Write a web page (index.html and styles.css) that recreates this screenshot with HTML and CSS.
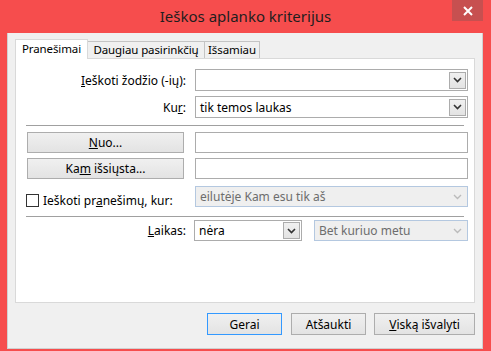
FILE: index.html
```html
<!DOCTYPE html>
<html lang="lt">
<head>
    <meta charset="UTF-8">
    <title>Ieškos aplanko kriterijus</title>
    <link rel="stylesheet" href="styles.css">
</head>
<body>
    <div class="window">
        <div class="titlebar">
            <span></span>
            <span class="title">Ieškos aplanko kriterijus</span>
            <span class="close">
                <svg width="10" height="10" viewBox="0 0 10 10"><path d="M1 1 L9 9 M9 1 L1 9" stroke="#fff" stroke-width="2"/></svg>
            </span>
        </div>

        <div class="client">
            <div class="tabs">
                <div class="tab active">Pranešimai</div>
                <div class="tab t2">Daugiau pasirinkčių</div>
                <div class="tab t3">Išsamiau</div>
            </div>

            <div class="panel">
                <div class="row r1">
                    <label class="lbl"><u>I</u>eškoti žodžio (-ių):</label>
                    <div class="combo">
                        <span class="val"></span>
                        <span class="drop"><svg width="9" height="6" viewBox="0 0 9 6"><path d="M1 1 L4.5 4.5 L8 1" stroke="#333" stroke-width="1.6" fill="none"/></svg></span>
                    </div>
                </div>
                <div class="row r2">
                    <label class="lbl">Ku<u>r</u>:</label>
                    <div class="combo">
                        <span class="val">tik temos laukas</span>
                        <span class="drop"><svg width="9" height="6" viewBox="0 0 9 6"><path d="M1 1 L4.5 4.5 L8 1" stroke="#333" stroke-width="1.6" fill="none"/></svg></span>
                    </div>
                </div>

                <div class="sep"></div>

                <div class="row r3">
                    <button class="btn wide"><u>N</u>uo...</button>
                    <div class="field"></div>
                </div>
                <div class="row r4">
                    <button class="btn wide">Ka<u>m</u> išsiųsta...</button>
                    <div class="field"></div>
                </div>
                <div class="row r5">
                    <label class="check"><span class="box"></span><span>Ieškoti pr<u>a</u>nešimų, kur:</span></label>
                    <div class="combo disabled">
                        <span class="val">eilutėje Kam esu tik aš</span>
                        <span class="drop"><svg width="9" height="6" viewBox="0 0 9 6"><path d="M1 1 L4.5 4.5 L8 1" stroke="#bbb" stroke-width="1.4" fill="none"/></svg></span>
                    </div>
                </div>

                <div class="sep"></div>

                <div class="row r6">
                    <label class="lbl"><u>L</u>aikas:</label>
                    <div class="pair">
                        <div class="combo short">
                            <span class="val">nėra</span>
                            <span class="drop"><svg width="9" height="6" viewBox="0 0 9 6"><path d="M1 1 L4.5 4.5 L8 1" stroke="#333" stroke-width="1.6" fill="none"/></svg></span>
                        </div>
                        <div class="combo disabled when">
                            <span class="val">Bet kuriuo metu</span>
                            <span class="drop"><svg width="9" height="6" viewBox="0 0 9 6"><path d="M1 1 L4.5 4.5 L8 1" stroke="#bbb" stroke-width="1.4" fill="none"/></svg></span>
                        </div>
                    </div>
                </div>
            </div>

            <div class="actions">
                <button class="btn def">Gerai</button>
                <button class="btn">Atšaukti</button>
                <button class="btn big"><u>V</u>iską išvalyti</button>
            </div>
        </div>
    </div>
</body>
</html>
```

FILE: styles.css
```css
* {
    margin: 0;
    padding: 0;
    box-sizing: border-box;
}

body {
    width: 491px;
    height: 351px;
    overflow: hidden;
    background-color: #f64d4d;
    font-family: "Noto Sans", "Open Sans", sans-serif;
    font-size: 12px;
    color: #000;
}

.titlebar {
    height: 33px;
    display: grid;
    grid-template-columns: 1fr auto 1fr;
    align-items: start;
}

.title {
    font-size: 15px;
    color: #1e1e1e;
    line-height: 32px;
}

.close {
    justify-self: end;
    width: 31px;
    height: 21px;
    margin-right: 8px;
    background-color: #c75050;
    display: flex;
    align-items: center;
    justify-content: center;
}

.client {
    margin: 0 8px 0 7px;
    height: 316px;
    background-color: #f0f0f0;
    border: 1px solid #d0d0d0;
    border-top: none;
    padding: 6px 7px 0 6px;
}

/* tabs */
.tabs {
    display: flex;
    align-items: flex-end;
    height: 19px;
    padding-left: 1px;
}

.tab {
    height: 17px;
    border: 1px solid #c4c4c4;
    border-bottom: none;
    background-color: #f0f0f0;
    text-align: center;
    line-height: 15px;
    font-size: 11.5px;
    white-space: nowrap;
    letter-spacing: -0.1px;
    position: relative;
    z-index: 1;
}

.tab.active {
    width: 73px;
    height: 20px;
    margin-bottom: -1px;
    background-color: #fff;
    border-color: #d9d9d9;
    z-index: 2;
    line-height: 18px;
}

.tab.t2 {
    width: 117px;
    border-left: none;
}

.tab.t3 {
    width: 56px;
    border-left: 1px solid #c4c4c4;
    margin-left: -1px;
}

.panel {
    width: 460px;
    height: 245px;
    margin-left: 1px;
    background-color: #fff;
    border: 1px solid #d9d9d9;
    padding: 10px 6px 0 10px;
}

.row {
    display: grid;
    grid-template-columns: 161px 1fr;
    column-gap: 8px;
    align-items: center;
}

.r2 { margin-top: 5px; }
.r3 { margin-top: 6px; }
.r4 { margin-top: 5px; }
.r5 { margin-top: 5px; }
.r6 { margin-top: 3px; }

.lbl {
    text-align: right;
    padding-right: 1px;
}

.sep {
    height: 1px;
    margin: 7px 4px 0 0;
    background-color: #a0a0a0;
}

.r1 .combo, .r2 .combo {
    height: 22px;
}

.combo {
    height: 21px;
    border: 1px solid #acacac;
    background-color: #fff;
    display: flex;
    align-items: center;
    justify-content: space-between;
    padding: 0 1px 0 4px;
}

.combo .val {
    white-space: nowrap;
}

.drop {
    width: 17px;
    height: 17px;
    border: 1px solid #acacac;
    background: linear-gradient(#f0f0f0, #e3e3e3);
    display: flex;
    align-items: center;
    justify-content: center;
}

.combo.disabled {
    background-color: #efefef;
    border-color: #b4c8e0;
    color: #6d6d6d;
}

.combo.disabled .drop {
    border: none;
    background: none;
}

.field {
    height: 21px;
    border: 1px solid #acacac;
    background-color: #fff;
}

.btn {
    font-family: inherit;
    font-size: 12px;
    color: #000;
    height: 21px;
    border: 1px solid #adadad;
    background: linear-gradient(#f0f0f0, #e3e3e3);
}

.btn.wide {
    width: 157px;
    margin-left: 1px;
}

.check {
    display: flex;
    align-items: center;
    gap: 4px;
    padding-top: 8px;
    white-space: nowrap;
}

.box {
    width: 13px;
    height: 13px;
    border: 1px solid #333;
    background-color: #fff;
}

.pair {
    display: flex;
    gap: 12px;
    margin-left: -1px;
}

.combo.short {
    width: 108px;
}

.combo.when {
    flex: 1;
}

.actions {
    display: flex;
    justify-content: flex-end;
    gap: 9px;
    margin-top: 10px;
}

.actions .btn {
    width: 75px;
    height: 22px;
}

.actions .btn.big {
    width: 101px;
    margin-left: -1px;
}

.btn.def {
    border-color: #3399ff;
}
```
